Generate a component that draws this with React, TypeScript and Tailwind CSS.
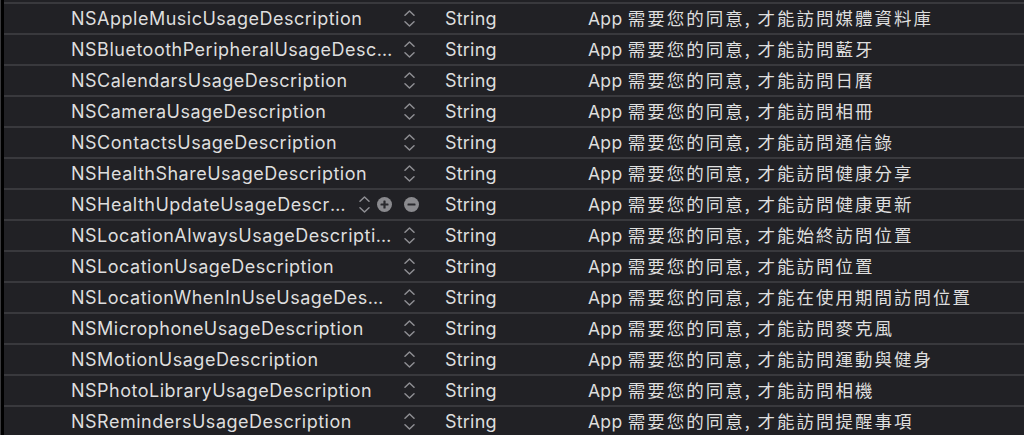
import React from "react";

const rows: { key: string; value: string; active?: boolean }[] = [
  { key: "NSAppleMusicUsageDescription", value: "需要您的同意, 才能訪問媒體資料庫" },
  { key: "NSBluetoothPeripheralUsageDescription", value: "需要您的同意, 才能訪問藍牙" },
  { key: "NSCalendarsUsageDescription", value: "需要您的同意, 才能訪問日曆" },
  { key: "NSCameraUsageDescription", value: "需要您的同意, 才能訪問相冊" },
  { key: "NSContactsUsageDescription", value: "需要您的同意, 才能訪問通信錄" },
  { key: "NSHealthShareUsageDescription", value: "需要您的同意, 才能訪問健康分享" },
  { key: "NSHealthUpdateUsageDescription", value: "需要您的同意, 才能訪問健康更新", active: true },
  { key: "NSLocationAlwaysUsageDescription", value: "需要您的同意, 才能始終訪問位置" },
  { key: "NSLocationUsageDescription", value: "需要您的同意, 才能訪問位置" },
  { key: "NSLocationWhenInUseUsageDescription", value: "需要您的同意, 才能在使用期間訪問位置" },
  { key: "NSMicrophoneUsageDescription", value: "需要您的同意, 才能訪問麥克風" },
  { key: "NSMotionUsageDescription", value: "需要您的同意, 才能訪問運動與健身" },
  { key: "NSPhotoLibraryUsageDescription", value: "需要您的同意, 才能訪問相機" },
  { key: "NSRemindersUsageDescription", value: "需要您的同意, 才能訪問提醒事項" },
];

function Stepper() {
  return (
    <div className="flex flex-col items-center gap-[5px] w-[12px]">
      <svg width="11" height="6" viewBox="0 0 11 6">
        <path d="M1 5.2 L5.5 1 L10 5.2" fill="none" stroke="#8e8e93" strokeWidth="1.5" strokeLinecap="round" strokeLinejoin="round" />
      </svg>
      <svg width="11" height="6" viewBox="0 0 11 6">
        <path d="M1 0.8 L5.5 5 L10 0.8" fill="none" stroke="#8e8e93" strokeWidth="1.5" strokeLinecap="round" strokeLinejoin="round" />
      </svg>
    </div>
  );
}

function CircleBtn({ plus }: { plus?: boolean }) {
  return (
    <svg width="15" height="15" viewBox="0 0 15 15">
      <circle cx="7.5" cy="7.5" r="7.5" fill="#8a8a8e" />
      <rect x="3.5" y="6.4" width="8" height="2.2" rx="0.6" fill="#2a2a2e" />
      {plus && <rect x="6.4" y="3.5" width="2.2" height="8" rx="0.6" fill="#2a2a2e" />}
    </svg>
  );
}

export default function App() {
  return (
    <div
      className="w-[1024px] h-[435px] overflow-hidden bg-[#212125] flex"
      style={{ fontFamily: 'Inter, "Noto Sans CJK TC", sans-serif' }}
    >
      <div className="w-[1px] bg-[#3a3a3d]" />
      <div className="w-[3px] bg-[#000000]" />
      <div className="flex-1 flex flex-col">
        <div className="h-[2px] shrink-0" />
        {rows.map((r) => (
          <div
            key={r.key}
            className="h-[31px] shrink-0 border-t-2 border-[#39393d] flex items-center text-[18px] tracking-[0.5px] text-[#dedede]"
          >
            <div className="w-[67px] shrink-0" />
            {r.active ? (
              <div className="w-[374px] shrink-0 flex items-center">
                <div className="w-[279px] truncate leading-[29px]">{r.key}</div>
                <div className="ml-[8px]">
                  <Stepper />
                </div>
                <div className="ml-[7px]">
                  <CircleBtn plus />
                </div>
                <div className="ml-[12px]">
                  <CircleBtn />
                </div>
              </div>
            ) : (
              <div className="w-[374px] shrink-0 flex items-center">
                <div className="w-[323px] truncate leading-[29px]">{r.key}</div>
                <div className="ml-[9px]">
                  <Stepper />
                </div>
              </div>
            )}
            <div className="w-[143px] shrink-0 tracking-[0.2px]">String</div>
            <div className="flex-1 whitespace-nowrap">
              <span className="text-[17.5px] tracking-[0.3px]">App </span>
              <span
                className="text-[17.5px] tracking-[2px]"
                style={{ fontFamily: '"Noto Sans CJK TC", sans-serif' }}
              >
                {r.value}
              </span>
            </div>
          </div>
        ))}
      </div>
    </div>
  );
}
